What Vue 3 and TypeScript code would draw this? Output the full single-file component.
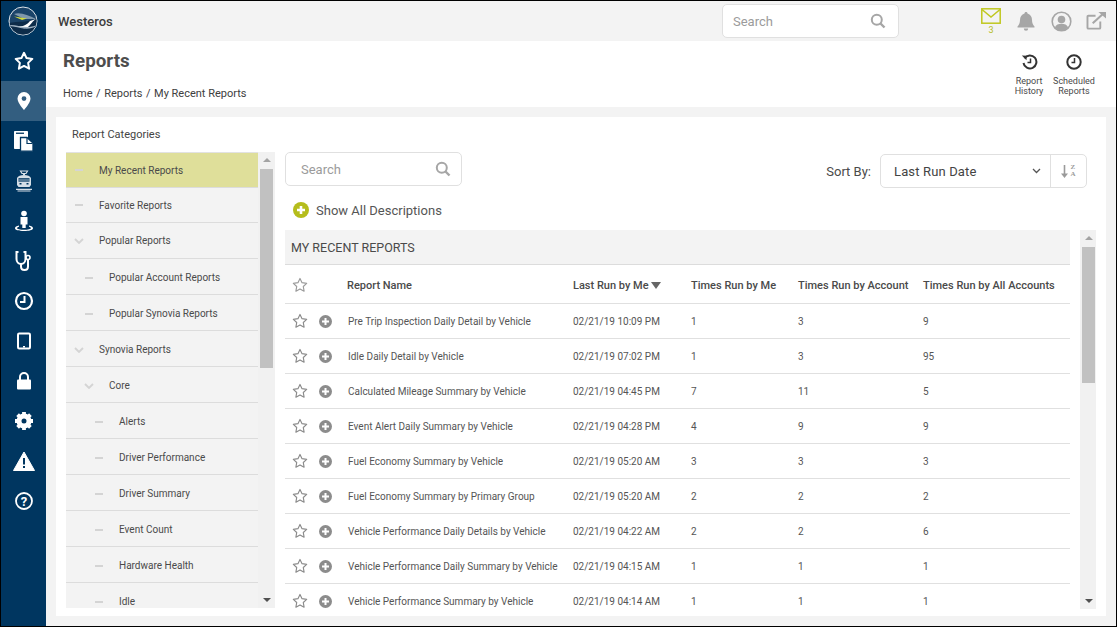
<script setup lang="ts">
interface Cat { label: string; level: number; icon: 'dash' | 'chev'; active?: boolean; h: number }
const cats: Cat[] = [
  { label: 'My Recent Reports', level: 0, icon: 'dash', active: true, h: 35 },
  { label: 'Favorite Reports', level: 0, icon: 'dash', h: 35 },
  { label: 'Popular Reports', level: 0, icon: 'chev', h: 36 },
  { label: 'Popular Account Reports', level: 1, icon: 'dash', h: 36 },
  { label: 'Popular Synovia Reports', level: 1, icon: 'dash', h: 36 },
  { label: 'Synovia Reports', level: 0, icon: 'chev', h: 36 },
  { label: 'Core', level: 1, icon: 'chev', h: 36 },
  { label: 'Alerts', level: 2, icon: 'dash', h: 36 },
  { label: 'Driver Performance', level: 2, icon: 'dash', h: 36 },
  { label: 'Driver Summary', level: 2, icon: 'dash', h: 36 },
  { label: 'Event Count', level: 2, icon: 'dash', h: 36 },
  { label: 'Hardware Health', level: 2, icon: 'dash', h: 36 },
  { label: 'Idle', level: 2, icon: 'dash', h: 36 },
]
const rows = [
  ['Pre Trip Inspection Daily Detail by Vehicle', '02/21/19 10:09 PM', '1', '3', '9'],
  ['Idle Daily Detail by Vehicle', '02/21/19 07:02 PM', '1', '3', '95'],
  ['Calculated Mileage Summary by Vehicle', '02/21/19 04:45 PM', '7', '11', '5'],
  ['Event Alert Daily Summary by Vehicle', '02/21/19 04:28 PM', '4', '9', '9'],
  ['Fuel Economy Summary by Vehicle', '02/21/19 05:20 AM', '3', '3', '3'],
  ['Fuel Economy Summary by Primary Group', '02/21/19 05:20 AM', '2', '2', '2'],
  ['Vehicle Performance Daily Details by Vehicle', '02/21/19 04:22 AM', '2', '2', '6'],
  ['Vehicle Performance Daily Summary by Vehicle', '02/21/19 04:15 AM', '1', '1', '1'],
  ['Vehicle Performance Summary by Vehicle', '02/21/19 04:14 AM', '1', '1', '1'],
]
const starPath = 'M9 1.6l2.3 4.8 5.2.7-3.8 3.6.9 5.2L9 13.4l-4.6 2.5.9-5.2L1.5 7.1l5.2-.7z'
</script>

<template>
  <div class="app">
    <nav class="side">
      <div class="logo">
        <svg width="30" height="30" viewBox="0 0 30 30">
          <defs><clipPath id="lc"><circle cx="15" cy="15" r="13.5" /></clipPath></defs>
          <circle cx="15" cy="15" r="14" fill="#1b4469" stroke="#dfe5ea" stroke-width="1" />
          <g clip-path="url(#lc)">
            <path d="M1 17C10 15 20 17 29 12V29H1z" fill="#0d2c49" />
            <path d="M6 8C12 6 20 9 28 13L16 13z" fill="#7f98ac" />
            <path d="M6 10.500l13 2-5 1.500z" fill="#d4dc3a" />
            <path d="M9 20c6 1 10-1 13-5l6-2c-5 3-6 8-10 9-3 .5-6-.5-9-2z" fill="#fff" />
            <path d="M1 19c8-1 16 5 28 0v1c-11 6-20 0-28 0z" fill="#9fb2c2" />
          </g>
        </svg>
      </div>
      <div class="nav-i">
        <svg width="20" height="20" viewBox="0 0 18 18"><path :d="starPath" fill="none" stroke="#fff" stroke-width="1.800" stroke-linejoin="round" /></svg>
      </div>
      <div class="nav-i on">
        <svg width="20" height="20" viewBox="0 0 20 20"><path fill-rule="evenodd" d="M10 1a6.500 6.500 0 0 0-6.500 6.500C3.500 12 10 19 10 19s6.500-7 6.500-11.500A6.500 6.500 0 0 0 10 1zm0 4.200a2.400 2.400 0 1 1 0 4.800 2.400 2.400 0 0 1 0-4.800z" fill="#fff" /></svg>
      </div>
      <div class="nav-i">
        <svg width="22" height="22" viewBox="0 0 22 22"><rect x="1" y="1" width="14" height="18" rx=".8" fill="#fff" /><rect x="3" y="2.600" width="8" height="1.300" fill="#003660" /><path d="M7.500 7.500h6.500l6 5.500v8.200H7.500z" fill="#fff" stroke="#003660" stroke-width="1.300" /><path d="M14 8v5.500H19.500" fill="none" stroke="#003660" stroke-width="1.200" /></svg>
      </div>
      <div class="nav-i">
        <svg width="20" height="22" viewBox="0 0 20 22" fill="none" stroke="#d5dee6" stroke-width="1.200"><path d="M6.500 1h7l-1.500 2.500H8z" /><path d="M9 3.500h2v1.500H9z" fill="#d5dee6" stroke="none" /><path d="M3 8c1-2 3.500-3 7-3s6 1 7 3v7l-1.500 2h-11L3 15z" fill="#d5dee6" stroke="none" /><rect x="4.500" y="8.200" width="11" height="3.400" fill="#003660" stroke="none" /><path d="M4.500 10h11" stroke-width=".8" /><rect x="5.500" y="13" width="2" height="1.500" fill="#003660" stroke="none" /><rect x="12.500" y="13" width="2" height="1.500" fill="#003660" stroke="none" /><path d="M2 19.300h16M3.500 21h13" /></svg>
      </div>
      <div class="nav-i">
        <svg width="22" height="22" viewBox="0 0 22 22"><circle cx="11" cy="3.500" r="2.800" fill="#fff" /><path d="M7.500 7h7v7.500h-1.800V18h-3.400v-3.500H7.500z" fill="#fff" /><path d="M6 15.500C3.500 16 2 17 2 18.200 2 20 6 21 11 21s9-1 9-2.800c0-1.200-1.500-2.200-4-2.700v1.300c1.300.4 2 .9 2 1.400 0 .9-3 1.500-7 1.500s-7-.6-7-1.500c0-.5.7-1 2-1.400z" fill="#fff" /></svg>
      </div>
      <div class="nav-i">
        <svg width="22" height="22" viewBox="0 0 22 22" fill="none" stroke="#fff" stroke-width="2"><path d="M5.500 2H3.500v7c0 3 2 5 4.500 5s4.500-2 4.500-5V2h-2" /><path d="M8 14v2.500c0 2 1.500 3.500 3.500 3.500s3.500-1.500 3.500-3.500V10" /><circle cx="15" cy="7.500" r="2" stroke-width="1.600" /></svg>
      </div>
      <div class="nav-i">
        <svg width="20" height="20" viewBox="0 0 20 20"><circle cx="10" cy="10" r="8" fill="none" stroke="#fff" stroke-width="2.200" /><path d="M10.500 5v6H6" fill="none" stroke="#fff" stroke-width="2" /></svg>
      </div>
      <div class="nav-i">
        <svg width="16" height="18" viewBox="0 0 16 18"><rect x="2" y="1.500" width="12" height="15" rx="1.200" fill="none" stroke="#fff" stroke-width="2" /><rect x="7" y="14" width="2" height="1.500" fill="#fff" /></svg>
      </div>
      <div class="nav-i">
        <svg width="18" height="20" viewBox="0 0 18 20"><path d="M5 9V6a4 4 0 0 1 8 0v3" fill="none" stroke="#fff" stroke-width="2" /><rect x="2" y="8.500" width="14" height="10" rx="1" fill="#fff" /></svg>
      </div>
      <div class="nav-i">
        <svg width="20" height="20" viewBox="0 0 20 20"><circle cx="10" cy="10" r="5" fill="none" stroke="#fff" stroke-width="5" /><g stroke="#fff" stroke-width="3.800"><path d="M10 1v3M10 16v3M1 10h3M16 10h3M3.600 3.600l2.200 2.200M14.200 14.200l2.200 2.200M3.600 16.400l2.200-2.200M14.200 5.800l2.200-2.200" /></g></svg>
      </div>
      <div class="nav-i">
        <svg width="22" height="20" viewBox="0 0 22 20"><path d="M11 1L21.500 19.500H.5z" fill="#fff" stroke="#fff" stroke-linejoin="round" /><rect x="10" y="7" width="2" height="6.500" fill="#003660" /><rect x="10" y="15" width="2" height="2" fill="#003660" /></svg>
      </div>
      <div class="nav-i">
        <svg width="20" height="20" viewBox="0 0 20 20"><circle cx="10" cy="10" r="8" fill="none" stroke="#fff" stroke-width="1.800" /><text x="10" y="14.500" text-anchor="middle" class="q">?</text></svg>
      </div>
    </nav>

    <div class="main">
      <header class="top">
        <span class="brand">Westeros</span>
        <div class="search top-search">
          <span class="ph">Search</span>
          <svg width="16" height="16" viewBox="0 0 16 16" fill="none" stroke="#a6a6a6" stroke-width="2"><circle cx="6.800" cy="6.800" r="5" /><path d="M10.500 10.500L14.500 14.500" stroke-width="2.400" /></svg>
        </div>
        <div class="top-icons">
          <div class="mail">
            <svg width="20" height="16" viewBox="0 0 20 16" fill="none" stroke="#bfc71f" stroke-width="1.500"><rect x=".8" y=".8" width="18.400" height="14.400" /><path d="M1 1.500l9 7.500 9-7.500" /></svg>
            <span>3</span>
          </div>
          <svg class="bell" width="18" height="21" viewBox="0 0 18 21"><path d="M9 1c1 0 1.500.7 1.500 1.500C13.500 3.200 15 6 15 9c0 3 1 5 2.500 6.500v1H.5v-1C2 14 3 12 3 9c0-3 1.500-5.800 4.500-6.500C7.500 1.700 8 1 9 1z" fill="#a6a6a6" /><path d="M6.800 17.500h4.400a2.200 2.200 0 0 1-4.400 0z" fill="#a6a6a6" /></svg>
          <svg class="user" width="21" height="21" viewBox="0 0 21 21"><circle cx="10.500" cy="10.500" r="9.300" fill="none" stroke="#a6a6a6" stroke-width="1.600" /><circle cx="10.500" cy="8.500" r="3.800" fill="#a6a6a6" /><path d="M3.800 16.500c1.200-3 3.600-3.800 6.700-3.800s5.500.8 6.700 3.800a9 9 0 0 1-13.400 0z" fill="#a6a6a6" /></svg>
          <svg class="ext" width="21" height="19" viewBox="0 0 22 20" fill="none" stroke="#a6a6a6" stroke-width="2"><path d="M15 11v6.500a1 1 0 0 1-1 1H2.500a1 1 0 0 1-1-1V6a1 1 0 0 1 1-1H10" /><path d="M7 13L18 3" stroke-width="2.200" /><path d="M13 1h8v7z" fill="#a6a6a6" stroke="none" /></svg>
        </div>
      </header>

      <section class="page-head">
        <div class="titles">
          <h1>Reports</h1>
          <div class="crumbs"><span>Home</span><i>/</i><span>Reports</span><i>/</i><span>My Recent Reports</span></div>
        </div>
        <div class="head-actions">
          <div class="act hist">
            <svg width="17" height="16" viewBox="0 0 17 16" fill="none" stroke="#333" stroke-width="2"><path d="M3.500 4.300A6.500 6.500 0 1 1 2.500 9" /><path d="M.8 1.500l5 .3-.3 4.500z" fill="#333" stroke="none" /><path d="M9.500 4.500V8.500H6.500" stroke-width="1.500" /></svg>
            <span>Report<br />History</span>
          </div>
          <div class="act sched">
            <svg width="16" height="16" viewBox="0 0 16 16" fill="none" stroke="#333" stroke-width="2"><circle cx="8" cy="8" r="6.700" /><path d="M8.500 4v4.500H5.500" stroke-width="1.500" /></svg>
            <span>Scheduled<br />Reports</span>
          </div>
        </div>
      </section>

      <div class="content">
        <main class="card">
          <aside class="cats">
            <div class="cats-title">Report Categories</div>
            <div class="tree-wrap">
              <div class="tree">
                <div
                  v-for="(c, i) in cats"
                  :key="c.label"
                  class="cat"
                  :class="[`lv${c.level}`, { active: c.active, low: i > 2 }]"
                  :style="{ height: c.h + 'px' }"
                >
                  <span class="cat-ic">
                    <svg v-if="c.icon === 'chev'" width="10" height="6" viewBox="0 0 10 6" fill="none" stroke="#d4d4d4" stroke-width="1.800"><path d="M1 1l4 4 4-4" /></svg>
                    <span v-else class="dash"></span>
                  </span>
                  <span>{{ c.label }}</span>
                </div>
              </div>
              <div class="sb tree-sb">
                <span class="arr up"></span>
                <span class="thumb"></span>
                <span class="arr down"></span>
              </div>
            </div>
          </aside>

          <section class="reports">
            <div class="tools">
              <div class="search list-search">
                <span class="ph">Search</span>
                <svg width="16" height="16" viewBox="0 0 16 16" fill="none" stroke="#a6a6a6" stroke-width="2"><circle cx="6.800" cy="6.800" r="5" /><path d="M10.500 10.500L14.500 14.500" stroke-width="2.400" /></svg>
              </div>
              <div class="sort">
                <span class="sort-l">Sort By:</span>
                <div class="sort-box">
                  <span class="sort-v">Last Run Date</span>
                  <svg width="9" height="6" viewBox="0 0 9 6" fill="none" stroke="#555" stroke-width="1.300"><path d="M1 1l3.500 3.500L8 1" /></svg>
                  <span class="sort-btn">
                    <svg width="7" height="13" viewBox="0 0 7 13" fill="none" stroke="#9a9a9a" stroke-width="1.600"><path d="M3.500 0v10" /><path d="M0 8.500h7l-3.500 4.500z" fill="#9a9a9a" stroke="none" /></svg>
                    <span class="az"><b>Z</b><b>A</b></span>
                  </span>
                </div>
              </div>
            </div>
            <div class="show-all">
              <svg width="16" height="16" viewBox="0 0 16 16"><circle cx="8" cy="8" r="8" fill="#b5bd1c" /><path d="M8 4v8M4 8h8" stroke="#fff" stroke-width="2.600" /></svg>
              <span>Show All Descriptions</span>
            </div>
            <div class="list-wrap">
              <div class="list">
                <div class="list-title">MY RECENT REPORTS</div>
                <div class="tr th">
                  <span class="c-star"><svg width="16" height="16" viewBox="0 0 18 18"><path :d="starPath" fill="none" stroke="#9a9a9a" stroke-width="1.300" stroke-linejoin="round" /></svg></span>
                  <span class="c-plus"></span>
                  <span class="c-name">Report Name</span>
                  <span class="c-date">Last Run by Me<i class="sort-tri"></i></span>
                  <span class="c-me">Times Run by Me</span>
                  <span class="c-acc">Times Run by Account</span>
                  <span class="c-all">Times Run by All Accounts</span>
                </div>
                <div v-for="r in rows" :key="r[0]" class="tr td">
                  <span class="c-star"><svg width="16" height="16" viewBox="0 0 18 18"><path :d="starPath" fill="none" stroke="#8a8a8a" stroke-width="1.300" stroke-linejoin="round" /></svg></span>
                  <span class="c-plus"><svg width="13" height="13" viewBox="0 0 13 13"><circle cx="6.500" cy="6.500" r="6.500" fill="#8c8c8c" /><path d="M6.500 3v7M3 6.500h7" stroke="#fff" stroke-width="2" /></svg></span>
                  <span class="c-name">{{ r[0] }}</span>
                  <span class="c-date">{{ r[1] }}</span>
                  <span class="c-me">{{ r[2] }}</span>
                  <span class="c-acc">{{ r[3] }}</span>
                  <span class="c-all">{{ r[4] }}</span>
                </div>
              </div>
              <div class="sb list-sb">
                <span class="arr up"></span>
                <span class="thumb"></span>
                <span class="arr down"></span>
              </div>
            </div>
          </section>
        </main>
      </div>
    </div>
  </div>
</template>

<style>
html, body { margin: 0; padding: 0; overflow: hidden; }
</style>

<style scoped>
.app {
  width: 1117px; height: 627px; box-sizing: border-box;
  border: 1px solid #000; display: flex; overflow: hidden;
  font-family: Roboto, "Liberation Sans", sans-serif; color: #4a4a4a; background: #f3f3f3;
}
.side { width: 45px; flex: none; background: #003660; display: flex; flex-direction: column; align-items: stretch; }
.logo { height: 40px; display: flex; align-items: center; justify-content: center; padding-right: 1px; box-sizing: border-box; }
.nav-i { height: 40px; display: flex; align-items: center; justify-content: center; }
.nav-i.on { background: #335e80; }
.q { font: 700 13px Roboto, sans-serif; fill: #fff; }
.main { flex: 1; min-width: 0; display: flex; flex-direction: column; }
.top { height: 40px; flex: none; background: #f3f3f3; display: flex; align-items: center; position: relative; }
.brand { margin-left: 12px; font-size: 13px; font-weight: 500; color: #3d3d3d; width: 55px; }
.search { box-sizing: border-box; background: #fff; border: 1px solid #e0e0e0; border-radius: 5px; display: flex; align-items: center; justify-content: space-between; }
.ph { color: #9b9b9b; font-size: 13px; }
.top-search { width: 177px; height: 34px; margin-left: 609px; padding: 0 12px 0 10px; }
.top-icons { display: flex; align-items: center; margin-left: 82px; }
.mail { display: flex; flex-direction: column; align-items: center; width: 20px; margin-top: 1px; }
.mail svg { display: block; }
.mail span { font-size: 9px; line-height: 10px; color: #b5bd1c; margin-top: 1px; }
.bell { margin-left: 16px; }
.user { margin-left: 16px; }
.ext { margin-left: 14px; margin-top: -2px; }
.page-head { height: 66px; flex: none; background: #fff; display: flex; justify-content: space-between; }
.titles { padding: 9px 0 0 17px; }
h1 { margin: 0; font-size: 18.800px; line-height: 22px; font-weight: 700; color: #4d4d4d; }
.crumbs { margin-top: 15px; font-size: 11px; line-height: 14px; color: #404040; display: flex; }
.crumbs i { font-style: normal; margin: 0 3.500px 0 3.500px; }
.head-actions { display: flex; padding: 13px 0 0 0; margin-right: 20px; }
.act { display: flex; flex-direction: column; align-items: center; font-size: 9px; line-height: 10px; text-align: center; color: #4a4a4a; }
.act svg { margin-bottom: 5px; margin-top: 0; }
.act.hist { width: 40px; margin-right: 1px; }
.act.sched { width: 44px; margin-left: 2px; }
.act span { margin-top: 1px; }
.content { flex: 1; min-height: 0; padding: 10px; display: flex; }
.card { flex: 1; background: #fff; display: flex; min-width: 0; }
.cats { width: 229px; flex: none; padding-left: 10px; box-sizing: border-box; display: flex; flex-direction: column; }
.cats-title { height: 35px; flex: none; padding: 11px 0 0 6px; box-sizing: border-box; font-size: 11px; line-height: 14px; color: #444; }
.tree-wrap { flex: none; height: 456px; display: flex; overflow: hidden; }
.tree { width: 192px; flex: none; overflow: hidden; background: #f3f3f3; border-top: 1px solid #e2e2e2; box-sizing: border-box; }
.cat { display: flex; align-items: center; box-sizing: border-box; border-bottom: 1px solid #dcdcdc; font-size: 10px; color: #4a4a4a; flex: none; }
.cat.active { background: #dfdf9a; }
.cat.low { padding-top: 2px; }
.cat-ic { width: 33px; flex: none; display: flex; justify-content: center; padding-right: 7px; box-sizing: border-box; }
.lv1 { padding-left: 10px; }
.lv2 { padding-left: 20px; }
.dash { width: 8px; height: 2px; background: #d4d4d4; display: block; }
.sb { background: #f1f1f1; display: flex; flex-direction: column; align-items: center; box-sizing: border-box; }
.tree-sb { width: 17px; padding: 0 2px; }
.thumb { background: #c1c1c1; display: block; width: 100%; }
.tree-sb .thumb { height: 199px; margin-top: 7px; }
.arr { width: 0; height: 0; border-left: 4px solid transparent; border-right: 4px solid transparent; display: block; }
.arr.up { border-bottom: 4px solid #a3a3a3; margin-top: 6px; }
.arr.down { border-top: 4px solid #505050; margin-top: auto; margin-bottom: 6px; }
.reports { flex: 1; min-width: 0; display: flex; flex-direction: column; }
.tools { display: flex; justify-content: space-between; padding-top: 35px; height: 69px; box-sizing: border-box; align-items: flex-start; }
.list-search { width: 177px; height: 34px; padding: 0 10px 0 15px; }
.sort { display: flex; align-items: center; margin-right: 19px; margin-top: 2px; }
.sort-l { font-size: 13px; color: #4a4a4a; margin-right: 9px; }
.sort-box { width: 207px; height: 34px; box-sizing: border-box; border: 1px solid #e0e0e0; border-radius: 5px; display: flex; align-items: center; }
.sort-v { font-size: 13px; color: #444; margin-left: 13px; flex: 1; letter-spacing: .15px; }
.sort-btn { width: 36px; height: 100%; margin-left: 9px; border-left: 1px solid #e0e0e0; box-sizing: border-box; display: flex; align-items: center; justify-content: center; gap: 2px; }
.az { display: flex; flex-direction: column; font-family: "Liberation Serif", serif; font-size: 7px; line-height: 7px; color: #9a9a9a; }
.az b { font-weight: 700; }
.show-all { height: 44px; flex: none; display: flex; align-items: center; padding: 0 0 2px 8px; box-sizing: border-box; font-size: 13px; color: #555; gap: 7px; margin-top: 3px; }
.list-wrap { display: flex; margin-top: -3px; height: 379px; flex: none; }
.list { width: 785px; flex: none; overflow: hidden; }
.list-title { height: 35px; box-sizing: border-box; background: #f3f3f3; border-bottom: 1px solid #dcdcdc; font-size: 12.500px; line-height: 35px; padding-left: 6px; color: #4a4a4a; }
.tr { display: flex; align-items: center; box-sizing: border-box; border-bottom: 1px solid #e0e0e0; }
.th { height: 39px; font-size: 11px; font-weight: 500; color: #4a4a4a; padding-top: 2px; }
.td { height: 35px; font-size: 10px; color: #555; }
.c-star { width: 30px; flex: none; display: flex; padding-left: 7px; box-sizing: border-box; }
.c-plus { width: 32px; flex: none; display: flex; padding-left: 4px; box-sizing: border-box; }
.c-name { width: 226px; flex: none; }
.c-date { width: 118px; flex: none; display: flex; align-items: center; }
.c-me { width: 107px; flex: none; }
.c-acc { width: 125px; flex: none; }
.c-all { flex: 1; }
.sort-tri { width: 0; height: 0; border-left: 5px solid transparent; border-right: 5px solid transparent; border-top: 7px solid #666; margin-left: 2px; }
.td .c-name { padding-left: 1px; box-sizing: border-box; }
.list-sb { width: 16px; margin-left: 10px; padding: 0 1px 0 2px; }
.list-sb .thumb { height: 136px; margin-top: 7px; }
</style>
